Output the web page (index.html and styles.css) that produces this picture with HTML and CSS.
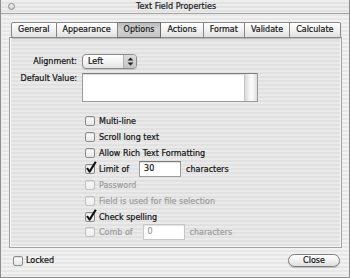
FILE: index.html
```html
<!DOCTYPE html>
<html>
<head>
<meta charset="utf-8">
<link rel="stylesheet" href="styles.css">
</head>
<body>
<div class="window">
  <div class="titlebar">
    <span class="dot"></span>
    <span class="title">Text Field Properties</span>
    <span class="spacer"></span>
  </div>
  <div class="main">
    <div class="tabs">
      <div class="tab">General</div>
      <div class="tab">Appearance</div>
      <div class="tab active">Options</div>
      <div class="tab">Actions</div>
      <div class="tab">Format</div>
      <div class="tab">Validate</div>
      <div class="tab">Calculate</div>
    </div>
    <div class="panel">
      <div class="field-row">
        <div class="label">Alignment:</div>
        <div class="popup">
          <span class="popup-text">Left</span>
          <span class="popup-arrows">
            <svg width="7" height="9" viewBox="0 0 7 9"><path d="M3.5 0.5 L6.5 3.5 L0.5 3.5 Z M0.5 5.5 L6.5 5.5 L3.5 8.5 Z" fill="#222"/></svg>
          </span>
        </div>
      </div>
      <div class="field-row top">
        <div class="label">Default Value:</div>
        <div class="textarea"><span class="track"></span></div>
      </div>
      <div class="checks">
        <div class="check-row"><span class="cb"></span><span>Multi-line</span></div>
        <div class="check-row"><span class="cb"></span><span>Scroll long text</span></div>
        <div class="check-row"><span class="cb"></span><span>Allow Rich Text Formatting</span></div>
        <div class="check-row"><span class="cb checked"><svg class="tick" width="12" height="13" viewBox="0 0 12 13"><path d="M2 7 L4.6 10.6 L10.8 0.8" fill="none" stroke="#111" stroke-width="2.1" stroke-linejoin="round"/></svg></span><span>Limit of</span><span class="input">30</span><span class="after">characters</span></div>
        <div class="check-row disabled"><span class="cb"></span><span>Password</span></div>
        <div class="check-row disabled"><span class="cb"></span><span>Field is used for file selection</span></div>
        <div class="check-row"><span class="cb checked"><svg class="tick" width="12" height="13" viewBox="0 0 12 13"><path d="M2 7 L4.6 10.6 L10.8 0.8" fill="none" stroke="#111" stroke-width="2.1" stroke-linejoin="round"/></svg></span><span>Check spelling</span></div>
        <div class="check-row disabled"><span class="cb"></span><span>Comb of</span><span class="input comb">0</span><span class="after">characters</span></div>
      </div>
    </div>
    <div class="footer">
      <div class="check-row"><span class="cb"></span><span>Locked</span></div>
      <div class="button">Close</div>
    </div>
  </div>
</div>
</body>
</html>
```

FILE: styles.css
```css
* { box-sizing: border-box; }
html, body { margin: 0; padding: 0; }
body {
  font-family: "DejaVu Sans", sans-serif;
  font-size: 8px;
  color: #111;
  background: #fff;
  -webkit-text-stroke: 0.2px currentColor;
}
.window {
  width: 350px;
  height: 278px;
  border: 1px solid #8e8e8e;
  border-top: none;
  background: repeating-linear-gradient(to bottom, #f1f1f1 0px, #f1f1f1 2px, #e7e7e7 2px, #e7e7e7 4px);
  display: flex;
  flex-direction: column;
}
.titlebar {
  height: 14px;
  border-bottom: 1px solid #a4a4a4;
  display: flex;
  align-items: center;
  padding-left: 7px;
  background: repeating-linear-gradient(to bottom, #ededed 0px, #ededed 2px, #e2e2e2 2px, #e2e2e2 4px);
}
.dot {
  width: 7px;
  height: 7px;
  border-radius: 50%;
  border: 1px solid #8a8a8a;
  background: linear-gradient(#f4f4f4, #cfcfcf);
}
.title {
  flex: 1;
  text-align: center;
  line-height: 14px;
  color: #1a1a1a;
  padding-left: 2px;
}
.spacer { width: 14px; }
.main {
  flex: 1;
  display: flex;
  flex-direction: column;
  padding: 8px 7px 0 8px;
}
.tabs {
  display: flex;
  margin-left: 2px;
  height: 16px;
  position: relative;
  z-index: 1;
}
.tab {
  height: 16px;
  line-height: 14px;
  padding: 0 6px;
  border: 1px solid #8a8a8a;
  border-left-width: 0;
  background: linear-gradient(#ffffff, #f2f2f2 50%, #e0e0e0);
  color: #151515;
  box-shadow: 0 1px 1px rgba(0,0,0,0.25);
}
.tab:first-child { border-left-width: 1px; border-radius: 2px 0 0 2px; }
.tab:last-child { border-radius: 0 2px 2px 0; }
.tab.active {
  background: linear-gradient(#bdbdbd, #d2d2d2 50%, #c4c4c4);
  border-color: #6e6e6e;
}
.panel {
  margin-top: -1px;
  height: 211px;
  border: 1px solid #a2a2a2;
  box-shadow: inset 0 0 0 1px #f8f8f8;
  background: repeating-linear-gradient(to bottom, #eaeaea 0px, #eaeaea 2px, #e1e1e1 2px, #e1e1e1 4px);
  padding: 16px 0 0 0;
  display: flex;
  flex-direction: column;
}
.field-row {
  display: flex;
  align-items: center;
  gap: 5px;
}
.field-row.top {
  align-items: flex-start;
  margin-top: 4px;
}
.field-row.top .label { padding-top: 1px; }
.label {
  width: 67px;
  text-align: right;
  color: #111;
}
.popup {
  width: 55px;
  height: 15px;
  border: 1px solid #8a8a8a;
  border-radius: 4px;
  background: linear-gradient(#ffffff, #f4f4f4 50%, #e4e4e4);
  display: flex;
  align-items: center;
  box-shadow: 0 1px 1px rgba(0,0,0,0.15);
  overflow: hidden;
}
.popup-text { flex: 1; padding-left: 5px; }
.popup-arrows {
  width: 13px;
  height: 100%;
  display: flex;
  align-items: center;
  justify-content: center;
  background: linear-gradient(#dcdcdc, #c4c4c4);
  border-left: 1px solid #b0b0b0;
}
.textarea {
  width: 176px;
  height: 29px;
  background: #fff;
  border: 1px solid #9a9a9a;
  border-top-color: #7e7e7e;
  box-shadow: inset 0 1px 1px rgba(0,0,0,0.15);
  display: flex;
  justify-content: flex-end;
}
.track {
  width: 13px;
  height: 100%;
  background: linear-gradient(to right, #d8d8d8, #f6f6f6 40%, #fafafa 60%, #dcdcdc);
  border-left: 1px solid #c6c6c6;
}
.checks {
  margin-top: 11px;
  padding-left: 75px;
  display: flex;
  flex-direction: column;
}
.check-row {
  display: flex;
  align-items: center;
  height: 16px;
  gap: 4px;
  color: #111;
}
.check-row:last-child { margin-top: -1px; }
.cb {
  width: 10px;
  height: 10px;
  border: 1px solid #8c8c8c;
  border-radius: 2px;
  background: linear-gradient(#fdfdfd, #e6e6e6);
  box-shadow: inset 0 1px 1px rgba(0,0,0,0.12);
  position: relative;
  flex: none;
}
.tick {
  position: absolute;
  left: -1px;
  top: -4px;
}
.disabled { color: #9c9c9c; }
.disabled .cb { border-color: #c0c0c0; background: linear-gradient(#fafafa, #eeeeee); }
.input {
  width: 42px;
  height: 16px;
  margin-left: 6px;
  background: #fff;
  border: 1px solid #9c9c9c;
  border-top-color: #7a7a7a;
  box-shadow: inset 0 1px 1px rgba(0,0,0,0.12);
  padding-left: 4px;
  line-height: 14px;
  color: #111;
}
.input.comb {
  border-color: #c6c6c6;
  color: #a0a0a0;
  margin-left: 6px;
}
.after { margin-left: 1px; }
.footer {
  display: flex;
  align-items: center;
  justify-content: space-between;
  padding: 6px 2px 0 4px;
}
.footer .check-row { height: 13px; gap: 3px; margin-top: 0; }
.button {
  width: 52px;
  height: 13px;
  border: 1px solid #7e7e7e;
  border-radius: 7px;
  background: linear-gradient(#ffffff, #f0f0f0 50%, #dedede);
  text-align: center;
  line-height: 11px;
  box-shadow: 0 1px 1px rgba(0,0,0,0.2);
}
```
